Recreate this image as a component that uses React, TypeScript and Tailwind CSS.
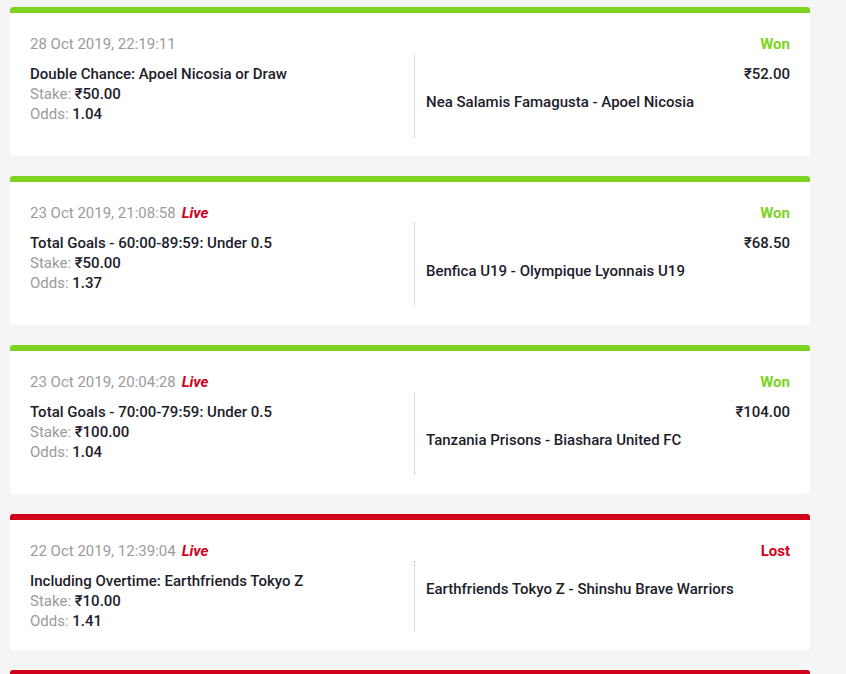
import React from "react";

type Bet = {
  date: string;
  live: boolean;
  won: boolean;
  market: string;
  stake: string;
  odds: string;
  payout?: string;
  match: string;
};

const BETS: Bet[] = [
  { date: "28 Oct 2019, 22:19:11", live: false, won: true, market: "Double Chance: Apoel Nicosia or Draw", stake: "₹50.00", odds: "1.04", payout: "₹52.00", match: "Nea Salamis Famagusta - Apoel Nicosia" },
  { date: "23 Oct 2019, 21:08:58", live: true, won: true, market: "Total Goals - 60:00-89:59: Under 0.5", stake: "₹50.00", odds: "1.37", payout: "₹68.50", match: "Benfica U19 - Olympique Lyonnais U19" },
  { date: "23 Oct 2019, 20:04:28", live: true, won: true, market: "Total Goals - 70:00-79:59: Under 0.5", stake: "₹100.00", odds: "1.04", payout: "₹104.00", match: "Tanzania Prisons - Biashara United FC" },
  { date: "22 Oct 2019, 12:39:04", live: true, won: false, market: "Including Overtime: Earthfriends Tokyo Z", stake: "₹10.00", odds: "1.41", match: "Earthfriends Tokyo Z - Shinshu Brave Warriors" },
];

function BetCard({ bet }: { bet: Bet }) {
  return (
    <div className="w-[800px] rounded-[3px] bg-white">
      {/* status bar */}
      <div className={`h-[6px] rounded-t-[3px] ${bet.won ? "bg-[#7ed321]" : "bg-[#d0021b]"}`} />
      <div className="px-5 pt-[21px] pb-[19px]">
        {/* Header */}
        <div className="flex h-5 items-center justify-between leading-5">
          <div className="flex items-center">
            <span className="text-[#9b9b9b]">{bet.date}</span>
            {bet.live && <span className="ml-[6px] font-bold italic text-[#d0021b]">Live</span>}
          </div>
          <span className={`font-bold ${bet.won ? "text-[#7ed321]" : "text-[#d0021b]"}`}>
            {bet.won ? "Won" : "Lost"}
          </span>
        </div>

        {/* Body */}
        <div className="flex">
          <div className="w-[384px] pt-[10px] leading-5">
            <div className="font-medium text-[#1d1d2b]">{bet.market}</div>
            <div className="text-[#9b9b9b]">
              Stake: <span className="font-medium text-[#1d1d2b]">{bet.stake}</span>
            </div>
            <div className="text-[#9b9b9b]">
              Odds: <span className="font-medium text-[#1d1d2b]">{bet.odds}</span>
            </div>
          </div>
          <div className="flex-1 border-l border-dotted border-[#bdbdbd] pl-[11px] pt-[10px] pb-[25px] leading-5">
            {bet.payout && (
              <div className="text-right font-medium text-[#1d1d2b]">{bet.payout}</div>
            )}
            <div className="mt-2 font-medium text-[#1d1d2b]">{bet.match}</div>
          </div>
        </div>
      </div>
    </div>
  );
}

export default function App() {
  return (
    <div
      className="h-[674px] overflow-hidden bg-[#f5f5f5] pl-[10px] pt-[7px] text-[15px]"
      style={{ fontFamily: "Roboto, 'Noto Sans', sans-serif" }}
    >
      <div className="flex flex-col gap-5">
        {BETS.map((bet) => (
          <BetCard key={bet.date} bet={bet} />
        ))}
        {/* next card, only its status bar is in view */}
        <div className="h-[6px] w-[800px] rounded-t-[3px] bg-[#d0021b]" />
      </div>
    </div>
  );
}
